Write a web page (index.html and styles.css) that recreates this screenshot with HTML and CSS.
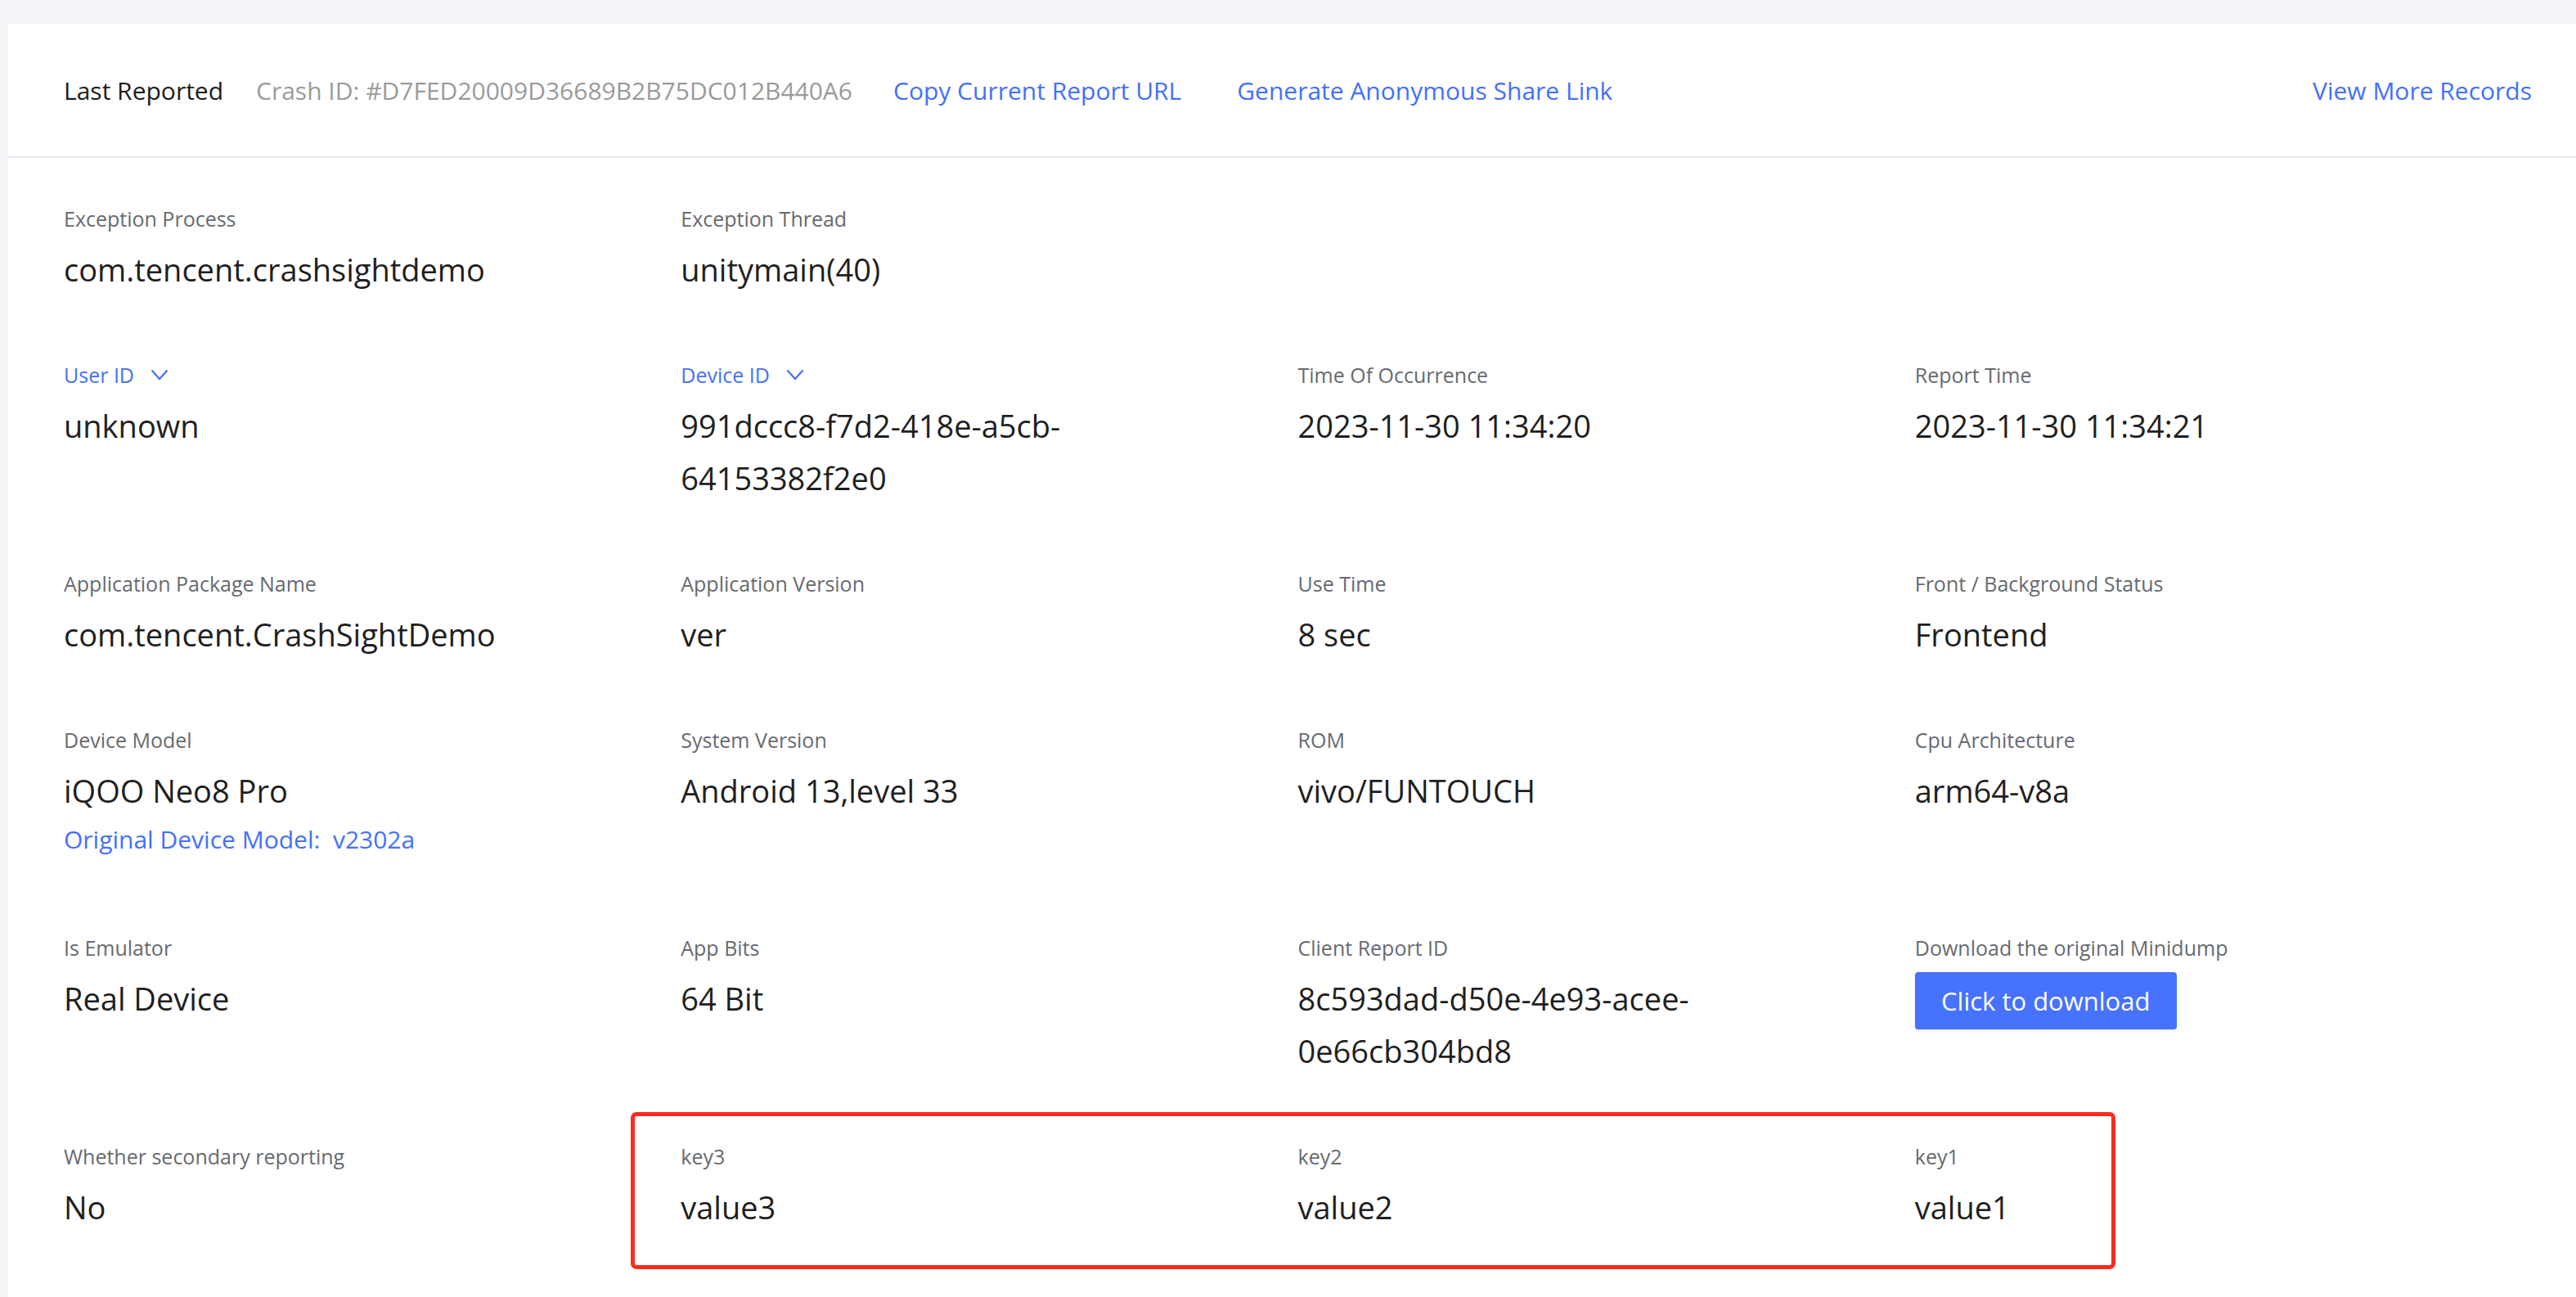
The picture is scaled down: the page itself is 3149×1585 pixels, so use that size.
FILE: index.html
```html
<!DOCTYPE html>
<html lang="en">
<head>
<meta charset="utf-8">
<title>Crash Report</title>
<link rel="stylesheet" href="styles.css">
</head>
<body>
<div class="page">
  <div class="card">
    <div class="card-head">
      <span class="head-title">Last Reported</span>
      <span class="crash-id">Crash ID: #D7FED20009D36689B2B75DC012B440A6</span>
      <a class="head-link copy">Copy Current Report URL</a>
      <a class="head-link share">Generate Anonymous Share Link</a>
      <a class="head-link more">View More Records</a>
    </div>
    <div class="info-grid">
      <div class="item"><div class="label">Exception Process</div><div class="value">com.tencent.crashsightdemo</div></div>
      <div class="item"><div class="label">Exception Thread</div><div class="value">unitymain(40)</div></div>
      <div class="item"></div>
      <div class="item"></div>

      <div class="item"><div class="label label-link">User ID <svg class="chev" viewBox="0 0 22 14"><polyline points="1.5,1.5 11,12 20.5,1.5"/></svg></div><div class="value">unknown</div></div>
      <div class="item"><div class="label label-link">Device ID <svg class="chev" viewBox="0 0 22 14"><polyline points="1.5,1.5 11,12 20.5,1.5"/></svg></div><div class="value">991dccc8-f7d2-418e-a5cb-64153382f2e0</div></div>
      <div class="item"><div class="label">Time Of Occurrence</div><div class="value">2023-11-30 11:34:20</div></div>
      <div class="item"><div class="label">Report Time</div><div class="value">2023-11-30 11:34:21</div></div>

      <div class="item"><div class="label">Application Package Name</div><div class="value">com.tencent.CrashSightDemo</div></div>
      <div class="item"><div class="label">Application Version</div><div class="value">ver</div></div>
      <div class="item"><div class="label">Use Time</div><div class="value">8 sec</div></div>
      <div class="item"><div class="label">Front / Background Status</div><div class="value">Frontend</div></div>

      <div class="item"><div class="label">Device Model</div><div class="value">iQOO Neo8 Pro</div><a class="sub-link">Original Device Model:&nbsp; v2302a</a></div>
      <div class="item"><div class="label">System Version</div><div class="value">Android 13,level 33</div></div>
      <div class="item"><div class="label">ROM</div><div class="value">vivo/FUNTOUCH</div></div>
      <div class="item"><div class="label">Cpu Architecture</div><div class="value">arm64-v8a</div></div>

      <div class="item"><div class="label">Is Emulator</div><div class="value">Real Device</div></div>
      <div class="item"><div class="label">App Bits</div><div class="value">64 Bit</div></div>
      <div class="item"><div class="label">Client Report ID</div><div class="value">8c593dad-d50e-4e93-acee-0e66cb304bd8</div></div>
      <div class="item"><div class="label">Download the original Minidump</div><button class="btn">Click to download</button></div>

      <div class="item"><div class="label">Whether secondary reporting</div><div class="value">No</div></div>
      <div class="custom">
        <div class="item"><div class="label">key3</div><div class="value">value3</div></div>
        <div class="item"><div class="label">key2</div><div class="value">value2</div></div>
        <div class="item"><div class="label">key1</div><div class="value">value1</div></div>
      </div>
    </div>
  </div>
</div>
</body>
</html>
```
FILE: styles.css
```css
*, *::before, *::after { box-sizing: border-box; }
html, body {
  margin: 0;
  padding: 0;
  background: #f3f4f8;
  font-family: "Open Sans", "Noto Sans", "Liberation Sans", sans-serif;
  overflow: hidden;
}
.page {
  padding: 29px 0 0 10px;
}
.card {
  background: #ffffff;
  min-height: 1600px;
}
.card-head {
  height: 164px;
  display: flex;
  align-items: center;
  padding: 0 54px 0 68px;
  border-bottom: 2px solid #e9e9ec;
  font-size: 30px;
  white-space: nowrap;
}
.head-title {
  color: #1c1c1c;
}
.crash-id {
  color: #9a9a9a;
  margin-left: 40px;
}
.head-link {
  color: #4470fa;
  cursor: pointer;
}
.copy { margin-left: 50px; }
.share { margin-left: 68px; }
.more { margin-left: auto; }

.info-grid {
  display: grid;
  grid-template-columns: repeat(4, 1fr);
  row-gap: 79px;
  padding: 56px 54px 0 68px;
}
.item {
  padding-right: 64px;
  min-width: 0;
}
.label {
  font-size: 25px;
  line-height: 36px;
  color: #666a70;
  margin-bottom: 12px;
  display: flex;
  align-items: center;
}
.label-link {
  color: #4470fa;
}
.chev {
  width: 22px;
  height: 14px;
  margin-left: 20px;
  fill: none;
  stroke: #4470fa;
  stroke-width: 2.2;
}
.value {
  font-size: 38px;
  line-height: 64px;
  color: #1f1f1f;
}
.sub-link {
  display: block;
  font-size: 30px;
  line-height: 56px;
  padding-bottom: 7px;
  color: #4470fa;
  cursor: pointer;
}
.btn {
  display: block;
  width: 320px;
  height: 70px;
  border: none;
  border-radius: 4px;
  background: #4672fe;
  color: #ffffff;
  font-family: inherit;
  font-size: 31px;
  box-shadow: 0 2px 3px rgba(0, 0, 0, 0.08);
  cursor: pointer;
}
.custom {
  grid-column: span 3;
  display: grid;
  grid-template-columns: repeat(3, 1fr);
  position: relative;
}
.custom::before {
  content: "";
  position: absolute;
  left: -61px;
  top: -36px;
  width: 1815px;
  height: 192px;
  border: 5px solid #fd2b1f;
  border-radius: 7px;
  pointer-events: none;
}
```
